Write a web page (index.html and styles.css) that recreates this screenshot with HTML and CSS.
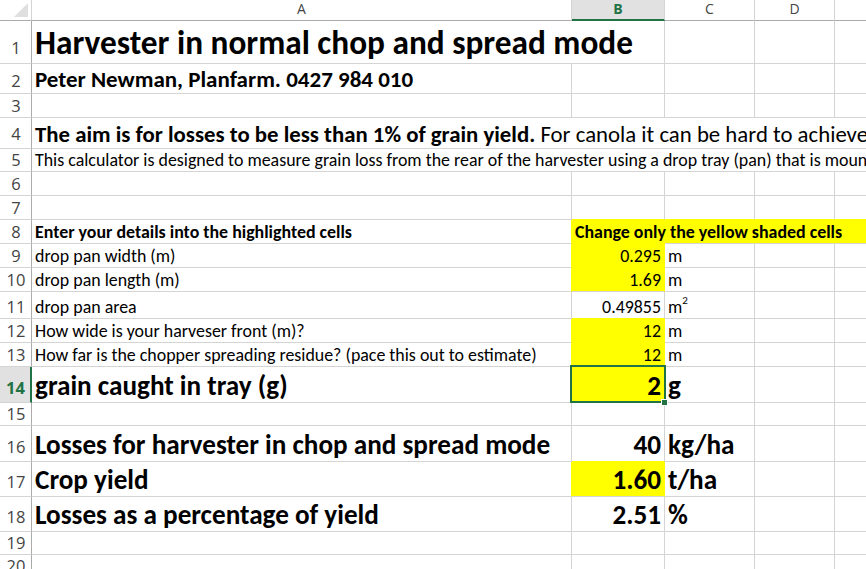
FILE: index.html
```html
<!DOCTYPE html>
<html lang="en">
<head>
    <meta charset="UTF-8">
    <title>Harvester losses calculator</title>
    <link rel="stylesheet" href="styles.css">
</head>
<body>
    <table class="sheet">
        <colgroup>
            <col class="c-head">
            <col class="c-a">
            <col class="c-b">
            <col class="c-c">
            <col class="c-d">
            <col class="c-e">
        </colgroup>
        <tr class="letters">
            <th class="corner"><span class="tri"></span></th>
            <th>A</th>
            <th class="on">B</th>
            <th>C</th>
            <th>D</th>
            <th></th>
        </tr>
        <tr class="h43 r-title">
            <th class="rn">1</th>
            <td colspan="2" class="title">Harvester in normal chop and spread mode</td>
            <td></td><td></td><td></td>
        </tr>
        <tr class="h30 r-sub">
            <th class="rn">2</th>
            <td class="author">Peter Newman, Planfarm. 0427 984 010</td>
            <td></td><td></td><td></td><td></td>
        </tr>
        <tr class="h24">
            <th class="rn">3</th>
            <td></td><td></td><td></td><td></td><td></td>
        </tr>
        <tr class="h31 r-aim">
            <th class="rn">4</th>
            <td colspan="5" class="aim"><b>The aim is for losses to be less than 1% of grain yield.</b> For canola it can be hard to achieve this in some crops.</td>
        </tr>
        <tr class="h23">
            <th class="rn">5</th>
            <td colspan="5">This calculator is designed to measure grain loss from the rear of the harvester using a drop tray (pan) that is mounted under the harvester.</td>
        </tr>
        <tr class="h24">
            <th class="rn">6</th>
            <td></td><td></td><td></td><td></td><td></td>
        </tr>
        <tr class="h24">
            <th class="rn">7</th>
            <td></td>
            <td class="y-down"></td><td class="y-down"></td><td class="y-down"></td><td class="y-down"></td>
        </tr>
        <tr class="h24">
            <th class="rn">8</th>
            <td class="y-left"><b>Enter your details into the highlighted cells</b></td>
            <td class="fill y-down"><b>Change only the yellow shaded cells</b></td>
            <td class="fill"></td><td class="fill"></td><td class="fill"></td>
        </tr>
        <tr class="h24">
            <th class="rn">9</th>
            <td class="y-left">drop pan width (m)</td>
            <td class="fill y-down num">0.295</td>
            <td>m</td><td></td><td></td>
        </tr>
        <tr class="h24">
            <th class="rn">10</th>
            <td class="y-left">drop pan length (m)</td>
            <td class="fill num">1.69</td>
            <td>m</td><td></td><td></td>
        </tr>
        <tr class="h27">
            <th class="rn">11</th>
            <td>drop pan area</td>
            <td class="num y-down">0.49855</td>
            <td>m<sup>2</sup></td><td></td><td></td>
        </tr>
        <tr class="h24">
            <th class="rn">12</th>
            <td class="y-left">How wide is your harveser front (m)?</td>
            <td class="fill y-down num">12</td>
            <td>m</td><td></td><td></td>
        </tr>
        <tr class="h24">
            <th class="rn">13</th>
            <td class="y-left">How far is the chopper spreading residue? (pace this out to estimate)</td>
            <td class="fill y-down num">12</td>
            <td>m</td><td></td><td></td>
        </tr>
        <tr class="h36 r-big big">
            <th class="rn on">14</th>
            <td class="y-left">grain caught in tray (g)</td>
            <td class="fill num sel">2</td>
            <td>g</td><td></td><td></td>
        </tr>
        <tr class="h23">
            <th class="rn">15</th>
            <td></td><td></td><td></td><td></td><td></td>
        </tr>
        <tr class="h36 r-big big">
            <th class="rn">16</th>
            <td>Losses for harvester in chop and spread mode</td>
            <td class="num y-down">40</td>
            <td>kg/ha</td><td></td><td></td>
        </tr>
        <tr class="h35 r-big big">
            <th class="rn">17</th>
            <td class="y-left">Crop yield</td>
            <td class="fill num">1.60</td>
            <td>t/ha</td><td></td><td></td>
        </tr>
        <tr class="h35 r-big big">
            <th class="rn">18</th>
            <td>Losses as a percentage of yield</td>
            <td class="num">2.51</td>
            <td>%</td><td></td><td></td>
        </tr>
        <tr class="h23">
            <th class="rn">19</th>
            <td></td><td></td><td></td><td></td><td></td>
        </tr>
        <tr class="h23">
            <th class="rn">20</th>
            <td></td><td></td><td></td><td></td><td></td>
        </tr>
    </table>
</body>
</html>
```
FILE: styles.css
```css
*{
    margin:0;
    padding:0;
}
html,body{
    height:100%;
    overflow:hidden;
    background:#fff;
}
.sheet{
    border-collapse:separate;
    border-spacing:0;
    table-layout:fixed;
    width:935px;
    font-family:Carlito,Lato,sans-serif;
    font-size:17.9px;
    color:#000;
}
.c-head{width:32px;}
.c-a{width:540px;}
.c-b{width:93px;}
.c-c{width:90px;}
.c-d{width:80px;}
.c-e{width:100px;}

.sheet th,.sheet td{
    box-sizing:border-box;
    white-space:nowrap;
    vertical-align:bottom;
}
.sheet td{
    border-right:1px solid #d4d4d4;
    border-bottom:1px solid #d4d4d4;
    padding:0 3px;
    line-height:normal;
}

/* column letters */
.letters{height:21px;}
.letters th{
    font:14px/1 "Open Sans",sans-serif;
    color:#444;
    text-align:center;
    border-right:1px solid #d4d4d4;
    border-bottom:1px solid #ababab;
    padding-bottom:4px;
}
.letters th.on{
    background:#e1e1e1;
    color:#217346;
    font-weight:bold;
    border-bottom:2px solid #217346;
    padding-bottom:3px;
}
.letters th.corner{
    position:relative;
    padding:0;
}
.tri{
    position:absolute;
    right:3px;
    bottom:3px;
    width:0;
    height:0;
    border-left:14px solid transparent;
    border-bottom:14px solid #dfdfdf;
}

/* row numbers */
.sheet .rn{
    font:16.5px/1 "Open Sans",sans-serif;
    color:#444;
    text-align:center;
    padding:0 0 3px 1px;
    border-right:1px solid #ababab;
    border-bottom:1px solid #d4d4d4;
}
.sheet .rn.on{
    background:#e1e1e1;
    color:#217346;
    font-weight:bold;
    border-right:2px solid #217346;
}
.r-title .rn{padding-bottom:7px;}
.r-sub .rn{padding-bottom:4px;}
.r-aim .rn{padding-bottom:6px;}
.r-big .rn{padding-bottom:6px;}

.h23{height:23px;}
.h24{height:24px;}
.h27{height:27px;}
.h30{height:30px;}
.h31{height:31px;}
.h35{height:35px;}
.h36{height:36px;}
.h43{height:43px;}

/* cell content */
.title{
    font-size:33.3px;
    font-weight:bold;
}
.author{
    font-size:23px;
    font-weight:bold;
}
.aim{
    font-size:22.8px;
}
.big td{
    font-size:27.2px;
    font-weight:bold;
}
.num{
    text-align:right;
}
sup{
    font-size:11px;
    vertical-align:9px;
    line-height:0;
}

/* yellow input cells hide the gridlines round them */
.fill{
    background:#ffff00;
    border-right-color:#ffff00 !important;
}
.y-down{border-bottom-color:#ffff00 !important;}
.y-left{border-right-color:#ffff00 !important;}

/* active cell */
.sel{
    position:relative;
}
.sel::after{
    content:"";
    position:absolute;
    left:-2px;
    top:-2px;
    right:-2px;
    bottom:-1px;
    border:2px solid #217346;
}
.sel::before{
    content:"";
    position:absolute;
    right:-4px;
    bottom:-4px;
    width:5px;
    height:5px;
    background:#217346;
    border:1px solid #fff;
    z-index:1;
}
```
